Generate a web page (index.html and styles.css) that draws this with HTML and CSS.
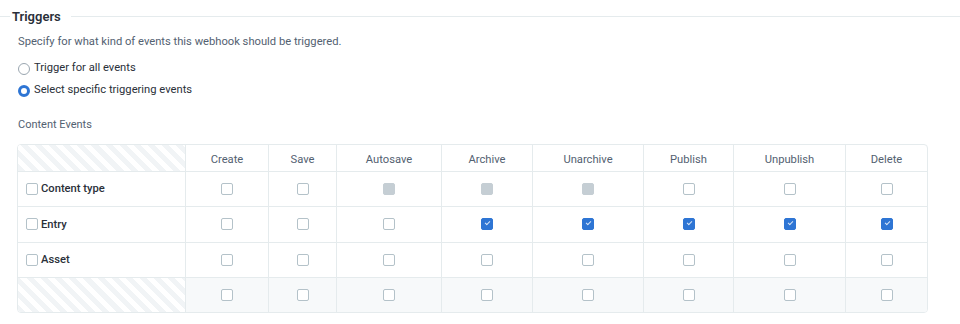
FILE: index.html
```html
<!DOCTYPE html>
<html lang="en">
<head>
    <meta charset="UTF-8">
    <title>Webhook triggers</title>
    <link rel="stylesheet" href="styles.css">
</head>
<body>

<section class="triggers">
    <div class="section-title">
        <h3>Triggers</h3>
    </div>
    <p class="hint">Specify for what kind of events this webhook should be triggered.</p>

    <label class="radio"><span class="radio-dot"></span>Trigger for all events</label>
    <label class="radio"><span class="radio-dot on"></span>Select specific triggering events</label>

    <div class="group-label">Content Events</div>

    <table class="events">
        <colgroup>
            <col class="col-name">
            <col style="width: 83px">
            <col style="width: 68px">
            <col style="width: 105px">
            <col style="width: 91px">
            <col style="width: 111px">
            <col style="width: 90px">
            <col style="width: 112px">
            <col>
        </colgroup>
        <thead>
            <tr>
                <th class="striped"></th>
                <th>Create</th>
                <th>Save</th>
                <th>Autosave</th>
                <th>Archive</th>
                <th>Unarchive</th>
                <th>Publish</th>
                <th>Unpublish</th>
                <th>Delete</th>
            </tr>
        </thead>
        <tbody>
            <tr>
                <td class="name"><span class="box"></span>Content type</td>
                <td><span class="box"></span></td>
                <td><span class="box"></span></td>
                <td><span class="box off"></span></td>
                <td><span class="box off"></span></td>
                <td><span class="box off"></span></td>
                <td><span class="box"></span></td>
                <td><span class="box"></span></td>
                <td><span class="box"></span></td>
            </tr>
            <tr class="tall">
                <td class="name"><span class="box"></span>Entry</td>
                <td><span class="box"></span></td>
                <td><span class="box"></span></td>
                <td><span class="box"></span></td>
                <td><span class="box on"></span></td>
                <td><span class="box on"></span></td>
                <td><span class="box on"></span></td>
                <td><span class="box on"></span></td>
                <td><span class="box on"></span></td>
            </tr>
            <tr>
                <td class="name"><span class="box"></span>Asset</td>
                <td><span class="box"></span></td>
                <td><span class="box"></span></td>
                <td><span class="box"></span></td>
                <td><span class="box"></span></td>
                <td><span class="box"></span></td>
                <td><span class="box"></span></td>
                <td><span class="box"></span></td>
                <td><span class="box"></span></td>
            </tr>
            <tr class="all-row">
                <td class="striped"></td>
                <td><span class="box"></span></td>
                <td><span class="box"></span></td>
                <td><span class="box"></span></td>
                <td><span class="box"></span></td>
                <td><span class="box"></span></td>
                <td><span class="box"></span></td>
                <td><span class="box"></span></td>
                <td><span class="box"></span></td>
            </tr>
        </tbody>
    </table>
</section>

</body>
</html>
```

FILE: styles.css
```css
body {
    font-family: 'Roboto', 'Liberation Sans', sans-serif;
    background-color: #ffffff;
    color: #2a3039;
    margin: 0;
    padding: 0;
}
.triggers {
    padding: 0 32px 0 0;
}
.section-title {
    display: flex;
    align-items: center;
    height: 32px;
}
.section-title::before {
    content: "";
    width: 10px;
    border-top: 1px solid #e5ebed;
}
.section-title::after {
    content: "";
    flex: 1;
    border-top: 1px solid #e5ebed;
    margin-right: -32px;
}
.section-title h3 {
    margin: 0 10px 0 2px;
    font-size: 13px;
    font-weight: 600;
    color: #2a3039;
}
.hint {
    margin: 0 0 0 18px;
    font-size: 11.2px;
    color: #536171;
    line-height: 20px;
}
.radio {
    display: flex;
    align-items: center;
    margin: 3px 0 0 18px;
    font-size: 11.2px;
    color: #2a3039;
    line-height: 19px;
}
.hint + .radio {
    margin-top: 6px;
}
.radio-dot {
    box-sizing: border-box;
    width: 12px;
    height: 12px;
    border: 1px solid #9aa6b0;
    border-radius: 50%;
    margin-right: 4px;
    margin-top: 2px;
}
.radio-dot.on {
    border: 3.5px solid #2e75d4;
    background-color: #ffffff;
}
.group-label {
    margin: 18px 0 0 18px;
    font-size: 11px;
    color: #536171;
    line-height: 16px;
}
.events {
    margin: 11px 0 0 17px;
    width: 911px;
    table-layout: fixed;
    border-collapse: separate;
    border-spacing: 0;
    border: 1px solid #e5ebed;
    border-radius: 4px;
    overflow: hidden;
    font-size: 11.2px;
}
.col-name {
    width: 167px;
}
.events th {
    height: 24px;
    font-weight: 400;
    color: #536171;
    text-align: center;
    border-left: 1px solid #e5ebed;
    padding: 2px 0 0;
}
.events td {
    height: 34px;
    text-align: center;
    border-left: 1px solid #e5ebed;
    border-top: 1px solid #e5ebed;
    padding: 0;
    vertical-align: middle;
}
.events tr.tall td {
    height: 35px;
}
.events th:first-child, .events td:first-child {
    border-left: none;
}
.events td.name {
    text-align: left;
    padding-left: 8px;
    font-weight: 500;
    color: #2a3039;
}
.events td.name .box {
    margin-right: 3px;
}
.all-row td {
    background-color: #f7f9fa;
}
.events .striped {
    background-color: #ffffff;
    background-image: repeating-linear-gradient(
        45deg,
        #f1f4f6 0,
        #f1f4f6 5px,
        #ffffff 5px,
        #ffffff 10px
    );
}
.box {
    display: inline-block;
    box-sizing: border-box;
    width: 12px;
    height: 12px;
    border: 1px solid #b4c2c9;
    border-radius: 2px;
    background-color: #ffffff;
    vertical-align: middle;
    position: relative;
    top: -1px;
}
.box.off {
    border-color: #c5ced4;
    background-color: #c5ced4;
}
.box.on {
    border-color: #2e75d4;
    background-color: #2e75d4;
}
.box.on::after {
    content: "";
    position: absolute;
    left: 3px;
    top: 2px;
    width: 4px;
    height: 2px;
    border-left: 1px solid #d6e4f7;
    border-bottom: 1px solid #d6e4f7;
    transform: rotate(-45deg);
}
```
